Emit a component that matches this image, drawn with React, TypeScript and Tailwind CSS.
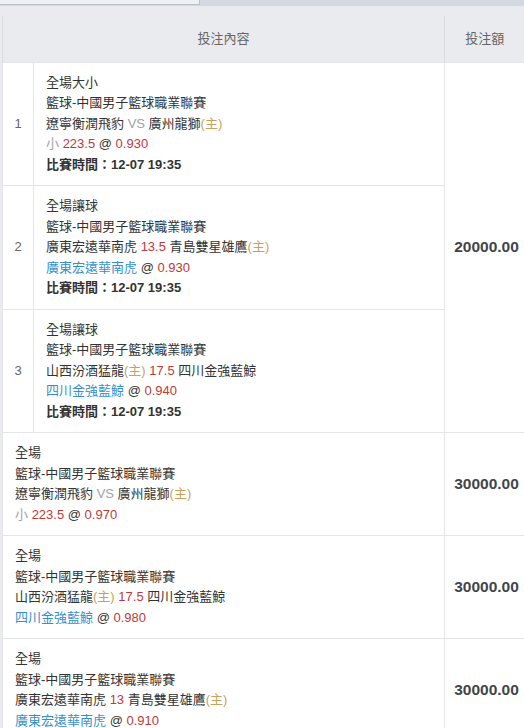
import React from "react";

const R = ({ children }: { children: React.ReactNode }) => <span className="text-[#c0393b]">{children}</span>;
const B = ({ children }: { children: React.ReactNode }) => <span className="text-[#348fcc]">{children}</span>;
const H = () => <span className="text-[#c9a15a]">(主)</span>;
const G = ({ children }: { children: React.ReactNode }) => <span className="text-[#9aa3ab]">{children}</span>;

const Time = () => <div className="font-bold">比賽時間：12-07 19:35</div>;

export default function App() {
  const cell = "border border-[#e3e5e8] align-middle";
  const amt = `${cell} text-center pl-[4px] font-bold text-[15.5px] text-[#3f454b]`;
  return (
    <div
      className="w-[524px] h-[728px] overflow-hidden bg-[#e9ebef] text-[13px] leading-[20.5px] text-[#333]"
      style={{ fontFamily: '"Liberation Sans", "Noto Sans CJK TC", sans-serif' }}
    >
      <div className="h-[6px] bg-[#d2d9e1] flex">
        <div className="w-[200px] h-[5px] bg-[#eef0f3] border-b border-r border-[#b8c0c8]" />
      </div>
      <div className="pl-[2px] pt-[10px]">
        <table className="w-[522px] border-collapse table-fixed">
          <colgroup>
            <col className="w-[31px]" />
            <col className="w-[411px]" />
            <col className="w-[80px]" />
          </colgroup>
          <thead>
            <tr className="h-[46px] bg-[#e9ebef] text-[#666]">
              <th colSpan={2} className="font-normal border-l border-r border-[#d8dbe0] text-center">投注內容</th>
              <th className="font-normal text-center">投注額</th>
            </tr>
          </thead>
          <tbody className="bg-white">
            <tr>
              <td className={`${cell} text-center text-[#666]`}>1</td>
              <td className={`${cell} pl-[12px] py-[10px]`}>
                <div>全場大小</div>
                <div>籃球-中國男子籃球職業聯賽</div>
                <div>遼寧衡潤飛豹 <G>VS</G> 廣州龍獅<H /></div>
                <div><G>小</G> <R>223.5</R> @ <R>0.930</R></div>
                <Time />
              </td>
              <td rowSpan={3} className={amt}>20000.00</td>
            </tr>
            <tr>
              <td className={`${cell} text-center text-[#666]`}>2</td>
              <td className={`${cell} pl-[12px] py-[10px]`}>
                <div>全場讓球</div>
                <div>籃球-中國男子籃球職業聯賽</div>
                <div>廣東宏遠華南虎 <R>13.5</R> 青島雙星雄鷹<H /></div>
                <div><B>廣東宏遠華南虎</B> @ <R>0.930</R></div>
                <Time />
              </td>
            </tr>
            <tr>
              <td className={`${cell} text-center text-[#666]`}>3</td>
              <td className={`${cell} pl-[12px] py-[10px]`}>
                <div>全場讓球</div>
                <div>籃球-中國男子籃球職業聯賽</div>
                <div>山西汾酒猛龍<H /> <R>17.5</R> 四川金強藍鯨</div>
                <div><B>四川金強藍鯨</B> @ <R>0.940</R></div>
                <Time />
              </td>
            </tr>
            <tr>
              <td colSpan={2} className={`${cell} pl-[12px] py-[10px]`}>
                <div>全場</div>
                <div>籃球-中國男子籃球職業聯賽</div>
                <div>遼寧衡潤飛豹 <G>VS</G> 廣州龍獅<H /></div>
                <div><G>小</G> <R>223.5</R> @ <R>0.970</R></div>
              </td>
              <td className={amt}>30000.00</td>
            </tr>
            <tr>
              <td colSpan={2} className={`${cell} pl-[12px] py-[10px]`}>
                <div>全場</div>
                <div>籃球-中國男子籃球職業聯賽</div>
                <div>山西汾酒猛龍<H /> <R>17.5</R> 四川金強藍鯨</div>
                <div><B>四川金強藍鯨</B> @ <R>0.980</R></div>
              </td>
              <td className={amt}>30000.00</td>
            </tr>
            <tr>
              <td colSpan={2} className={`${cell} pl-[12px] py-[10px]`}>
                <div>全場</div>
                <div>籃球-中國男子籃球職業聯賽</div>
                <div>廣東宏遠華南虎 <R>13</R> 青島雙星雄鷹<H /></div>
                <div><B>廣東宏遠華南虎</B> @ <R>0.910</R></div>
              </td>
              <td className={amt}>30000.00</td>
            </tr>
          </tbody>
        </table>
      </div>
    </div>
  );
}
